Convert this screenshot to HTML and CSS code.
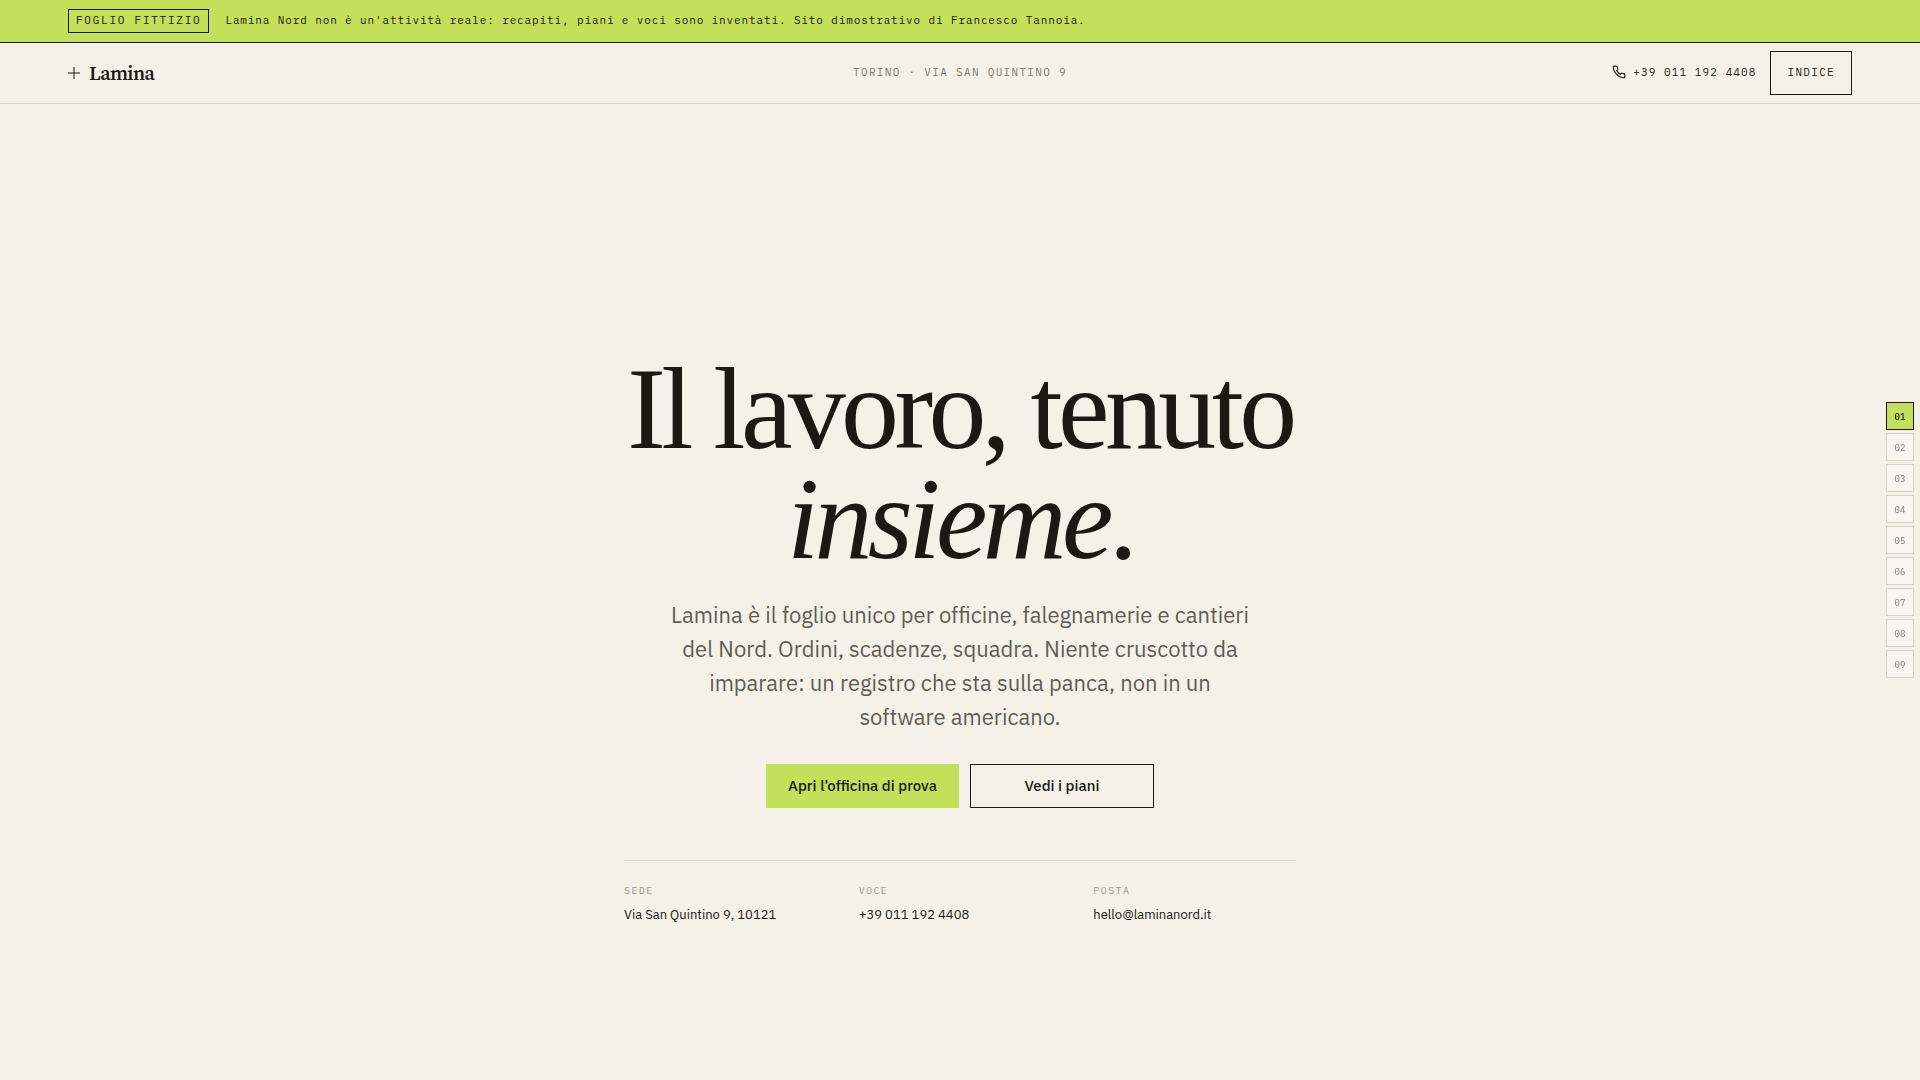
FILE: index.html
```html
<!DOCTYPE html>
<html lang="it">
  <head>
    <meta charset="UTF-8" />
    <meta name="viewport" content="width=device-width, initial-scale=1.0" />
    <title>Lamina Nord</title>
    <link rel="stylesheet" href="styles.css">
  </head>
  <body>
    <div class="notice">
      <span class="notice-tag">FOGLIO FITTIZIO</span>
      <p class="notice-text">Lamina Nord non è un'attività reale: recapiti, piani e voci sono inventati. Sito dimostrativo di Francesco Tannoia.</p>
    </div>

    <header class="header">
      <a class="brand" href="#top">
        <svg class="brand-mark" viewBox="0 0 12 12" aria-hidden="true">
          <path d="M6 0v12M0 6h12" />
        </svg>
        Lamina
      </a>
      <p class="header-place">TORINO · VIA SAN QUINTINO 9</p>
      <div class="header-actions">
        <a class="header-phone" href="tel:+390111924408">
          <svg class="phone-icon" viewBox="0 0 24 24" aria-hidden="true">
            <path d="M22 16.92v3a2 2 0 0 1-2.18 2 19.79 19.79 0 0 1-8.63-3.07 19.5 19.5 0 0 1-6-6 19.79 19.79 0 0 1-3.07-8.67A2 2 0 0 1 4.11 2h3a2 2 0 0 1 2 1.72 12.84 12.84 0 0 0 .7 2.81 2 2 0 0 1-.45 2.11L8.09 9.91a16 16 0 0 0 6 6l1.27-1.27a2 2 0 0 1 2.11-.45 12.84 12.84 0 0 0 2.81.7A2 2 0 0 1 22 16.92z" />
          </svg>
          +39 011 192 4408
        </a>
        <button class="index-btn" type="button">INDICE</button>
      </div>
    </header>

    <main class="hero" id="top">
      <div class="hero-inner">
        <h1 class="hero-title">Il lavoro, tenuto <em>insieme</em>.</h1>
        <p class="hero-lead">Lamina è il foglio unico per officine, falegnamerie e cantieri del Nord. Ordini, scadenze, squadra. Niente cruscotto da imparare: un registro che sta sulla panca, non in un software americano.</p>
        <div class="hero-actions">
          <a class="btn btn-primary" href="#prova">Apri l’officina di prova</a>
          <a class="btn btn-outline" href="#piani">Vedi i piani</a>
        </div>
        <dl class="contacts">
          <div class="contact">
            <dt>SEDE</dt>
            <dd>Via San Quintino 9, 10121</dd>
          </div>
          <div class="contact">
            <dt>VOCE</dt>
            <dd><a href="tel:+390111924408">+39 011 192 4408</a></dd>
          </div>
          <div class="contact">
            <dt>POSTA</dt>
            <dd><a href="mailto:hello@laminanord.it">hello@laminanord.it</a></dd>
          </div>
        </dl>
      </div>
    </main>

    <nav class="rail" aria-label="Sezioni">
      <a class="rail-link active" href="#s01">01</a>
      <a class="rail-link" href="#s02">02</a>
      <a class="rail-link" href="#s03">03</a>
      <a class="rail-link" href="#s04">04</a>
      <a class="rail-link" href="#s05">05</a>
      <a class="rail-link" href="#s06">06</a>
      <a class="rail-link" href="#s07">07</a>
      <a class="rail-link" href="#s08">08</a>
      <a class="rail-link" href="#s09">09</a>
    </nav>
  </body>
</html>
```

FILE: styles.css
```css
:root {
  --paper: #f4f1e8;
  --ink: #1a1914;
  --muted: #5f5d56;
  --faint: #9b988f;
  --line: #d6d3cb;
  --lime: #c4df59;
  --sans: "IBM Plex Sans", Roboto, sans-serif;
  --mono: "IBM Plex Mono", "Liberation Mono", monospace;
  --serif: "Source Serif 4", "Liberation Serif", serif;
  --display: "Liberation Serif", "Times New Roman", serif;
}

* {
  box-sizing: border-box;
}

body {
  margin: 0;
  min-height: 100vh;
  display: flex;
  flex-direction: column;
  background-color: var(--paper);
  color: var(--ink);
  font-family: var(--sans);
}

p,
h1,
dl,
dd {
  margin: 0;
}

a {
  color: inherit;
  text-decoration: none;
}

/* demo notice */
.notice {
  display: flex;
  align-items: baseline;
  gap: 16px;
  padding: 9px 68px;
  background-color: var(--lime);
  border-bottom: 1px solid var(--ink);
  font-family: var(--mono);
  font-size: 11px;
  line-height: 20px;
}

.notice-tag {
  padding: 0 7px 2px;
  border: 1px solid var(--ink);
  letter-spacing: 0.16em;
}

.notice-text {
  letter-spacing: 0.08em;
}

/* header */
.header {
  display: grid;
  grid-template-columns: 1fr auto 1fr;
  align-items: center;
  padding: 8px 68px;
  border-bottom: 1px solid var(--line);
  font-family: var(--mono);
  font-size: 11px;
}

.brand {
  display: flex;
  align-items: center;
  gap: 9px;
  font-family: var(--serif);
  font-size: 20px;
  font-weight: 600;
  letter-spacing: -0.03em;
}

.brand-mark {
  width: 12px;
  height: 12px;
  stroke: var(--ink);
  stroke-width: 1;
}

.header-place,
.header-phone {
  padding-bottom: 2px;
}

.header-place {
  color: #7d7b73;
  letter-spacing: 0.12em;
}

.header-actions {
  display: flex;
  align-items: center;
  justify-content: flex-end;
  gap: 14px;
}

.header-phone {
  display: flex;
  align-items: center;
  gap: 7px;
  letter-spacing: 0.1em;
}

.phone-icon {
  width: 14px;
  height: 14px;
  fill: none;
  stroke: var(--ink);
  stroke-width: 2;
  stroke-linejoin: round;
}

.index-btn {
  height: 44px;
  padding: 0 16px 2px;
  background: none;
  border: 1px solid var(--ink);
  color: var(--ink);
  font-family: var(--mono);
  font-size: 11px;
  letter-spacing: 0.12em;
  cursor: pointer;
}

/* hero */
.hero {
  flex: 1;
  display: flex;
  align-items: center;
  justify-content: center;
  padding: 94px 68px 0;
}

.hero-inner {
  width: 100%;
  max-width: 672px;
  text-align: center;
}

.hero-title {
  font-family: var(--display);
  font-size: 116px;
  font-weight: 400;
  line-height: 110px;
  letter-spacing: -0.04em;
}

.hero-lead {
  max-width: 592px;
  margin: 24px auto 0;
  color: var(--muted);
  font-size: 22px;
  line-height: 34px;
}

.hero-actions {
  display: flex;
  justify-content: center;
  gap: 11px;
  margin-top: 30px;
}

.btn {
  display: flex;
  align-items: center;
  justify-content: center;
  min-width: 184px;
  height: 44px;
  padding: 0 21px;
  border: 1px solid var(--ink);
  font-size: 15px;
  font-weight: 500;
}

.btn-primary {
  background-color: var(--lime);
  border-color: var(--lime);
}

.contacts {
  display: grid;
  grid-template-columns: repeat(3, 1fr);
  gap: 32px;
  margin-top: 52px;
  padding-top: 24px;
  border-top: 1px solid var(--line);
  text-align: left;
}

.contact dt {
  color: var(--faint);
  font-family: var(--mono);
  font-size: 10px;
  line-height: 12px;
  letter-spacing: 0.14em;
}

.contact dd {
  margin-top: 8px;
  font-size: 13px;
  line-height: 20px;
}

/* section rail */
.rail {
  position: fixed;
  top: 50%;
  right: 6px;
  transform: translateY(-50%);
  display: flex;
  flex-direction: column;
  gap: 3px;
}

.rail-link {
  display: flex;
  align-items: center;
  justify-content: center;
  width: 28px;
  height: 28px;
  background-color: #f8f6f0;
  border: 1px solid var(--line);
  color: #7d7b73;
  font-family: var(--mono);
  font-size: 9px;
}

.rail-link.active {
  background-color: var(--lime);
  border-color: var(--ink);
  color: var(--ink);
  font-weight: 500;
}
```
